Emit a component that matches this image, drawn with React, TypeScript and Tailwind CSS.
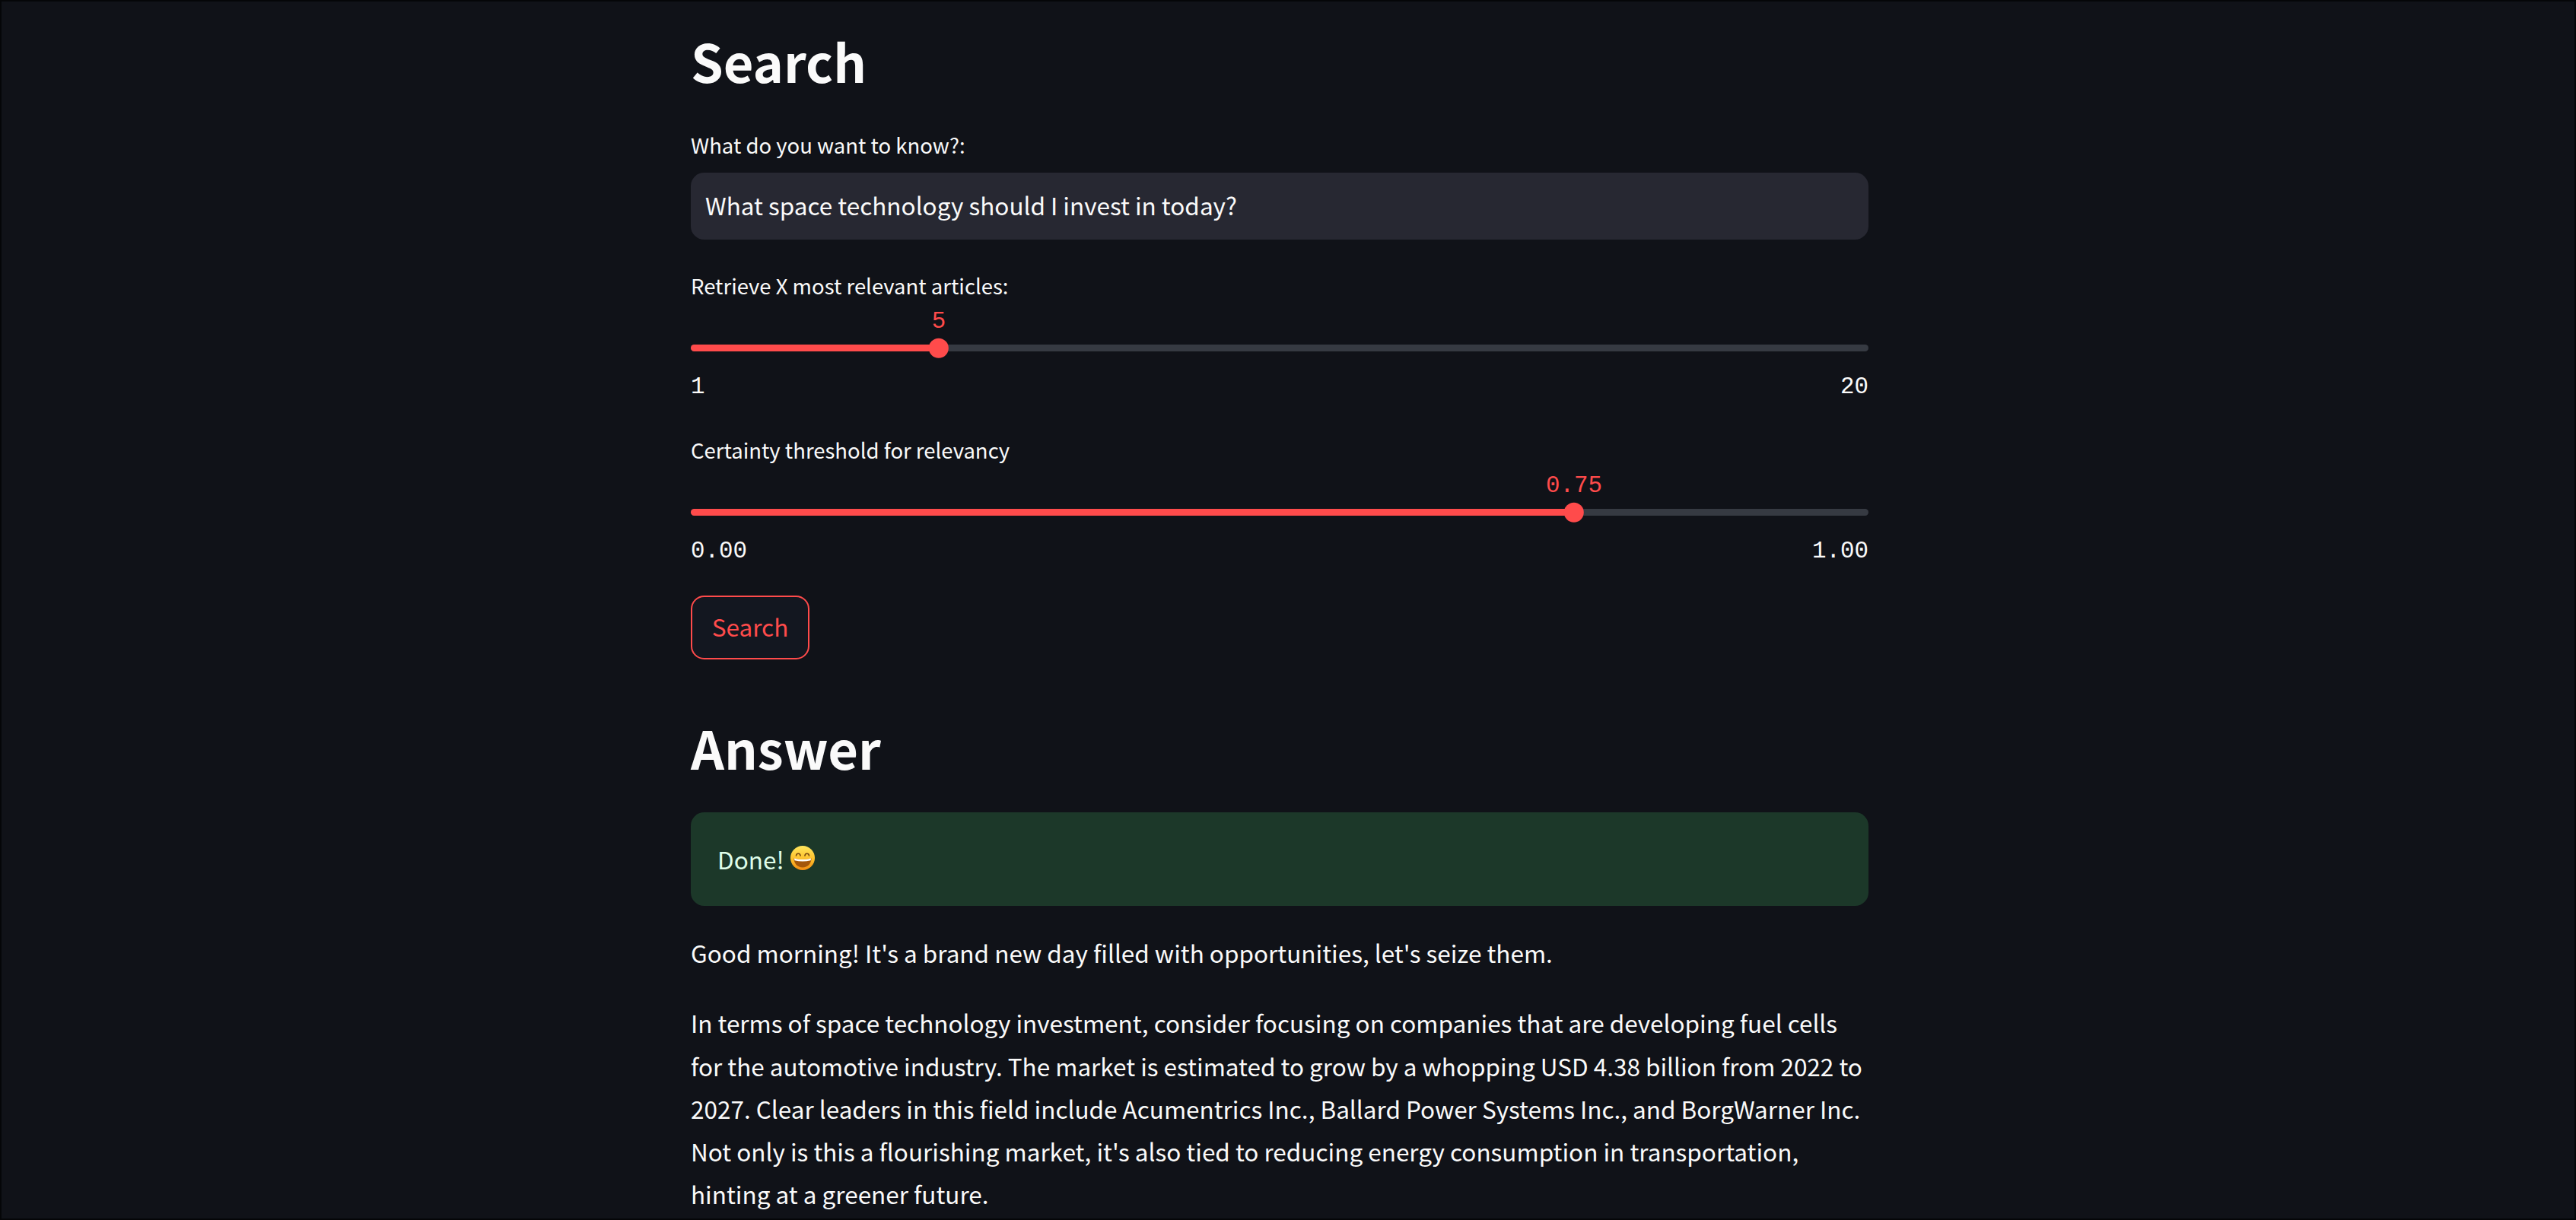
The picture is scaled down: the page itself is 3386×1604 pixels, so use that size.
const sans = "font-['Noto_Sans_CJK_SC','Noto_Sans',sans-serif]";

function Slider({ label, value, min, max, format }: { label: string; value: number; min: number; max: number; format: (n: number) => string }) {
  const pct = ((value - min) / (max - min)) * 100;
  return (
    <div>
      <div className="h-[44px] text-[27.5px] leading-[44px]">{label}</div>
      <div className="relative pt-[56px]">
        <div className="relative h-[9px] rounded-full bg-[#363a42]">
          <div className="h-full rounded-full bg-[#ff4b4b]" style={{ width: `${pct}%` }} />
          <div
            className="absolute top-1/2 h-[26.4px] w-[26.4px] -translate-x-1/2 -translate-y-1/2 rounded-full bg-[#ff4b4b]"
            style={{ left: `${pct}%` }}
          />
          <div
            className="absolute top-[-52px] -translate-x-1/2 font-['Liberation_Mono',monospace] text-[30.8px] leading-[44px] text-[#ff4b4b]"
            style={{ left: `${pct}%` }}
          >
            {format(value)}
          </div>
        </div>
        <div className="mt-[25px] flex justify-between font-['Liberation_Mono',monospace] text-[30.8px] leading-[44px]">
          <span>{format(min)}</span>
          <span>{format(max)}</span>
        </div>
      </div>
    </div>
  );
}

function GrinEmoji() {
  return (
    <svg className="mb-[3px] ml-[8px] h-[32px] w-[32px]" viewBox="0 0 32 32">
      <defs>
        <linearGradient id="face" x1="0" y1="0" x2="0" y2="1">
          <stop offset="0" stopColor="#ffe65c" />
          <stop offset="0.55" stopColor="#fdc02c" />
          <stop offset="1" stopColor="#f28a10" />
        </linearGradient>
      </defs>
      <circle cx="16" cy="16" r="16" fill="url(#face)" />
      <path d="M7.5 13c.5-3.6 5-3.6 5.6 0M18.9 13c.6-3.6 5.1-3.6 5.6 0" fill="none" stroke="#7a4a10" strokeWidth="1.6" strokeLinecap="round" />
      <path d="M4.5 16.5c7 2 16 2 23 0 0 7-5 12-11.500 12s-11.500-5-11.500-12z" fill="#a4560a" />
      <path d="M5 16.600c7 2 15 2 22 0l-.4 2.700c-7 1.700-14.200 1.700-21.200 0z" fill="#fff" />
    </svg>
  );
}

export default function App() {
  return (
    <div className={`h-[1604px] overflow-hidden border-2 border-[#050608] bg-[#101218] text-[#fafafa] ${sans}`}>
      <div className="ml-[906px] w-[1548px]">
        <h1 className="pt-[30px] text-[68.5px] font-semibold leading-[96px]">Search</h1>

        <div className="mt-[40px] h-[44px] text-[27.5px] leading-[44px]">What do you want to know?:</div>
        <div className="mt-[15px] flex h-[88px] items-center rounded-[17.600px] bg-[#272832] px-[19px] pb-[2px] text-[31.5px]">
          What space technology should I invest in today?
        </div>

        <div className="mt-[38px]">
          <Slider label="Retrieve X most relevant articles:" value={5} min={1} max={20} format={(n) => String(n)} />
        </div>
        <div className="mt-[38px]">
          <Slider label="Certainty threshold for relevancy" value={0.75} min={0} max={1} format={(n) => n.toFixed(2)} />
        </div>

        <button className="mt-[36px] flex h-[84px] w-[156px] items-center justify-center rounded-[17.600px] border-2 border-[#ff4b4b] bg-[#131720] pb-[2px] text-[31.5px] text-[#ff4b4b]">
          Search
        </button>

        <h1 className="mt-[68px] text-[68.5px] font-semibold leading-[96px]">Answer</h1>

        <div className="mt-[37px] flex h-[123px] items-center rounded-[17.600px] bg-[#1c3829] px-[35px] text-[31.5px] text-[#dffde9]">
          Done!
          <GrinEmoji />
        </div>

        <p className="mt-[33px] text-[31.5px] leading-[56.300px]">
          Good morning! It's a brand new day filled with opportunities, let's seize them.
        </p>
        <p className="mt-[36px] text-[31.5px] leading-[56.300px]">
          In terms of space technology investment, consider focusing on companies that are developing fuel cells for the automotive industry. The market is estimated to grow by a whopping USD 4.38 billion from 2022 to 2027. Clear leaders in this field include Acumentrics Inc., Ballard Power Systems Inc., and BorgWarner Inc. Not only is this a flourishing market, it's also tied to reducing energy consumption in transportation, hinting at a greener future.
        </p>
      </div>
    </div>
  );
}
